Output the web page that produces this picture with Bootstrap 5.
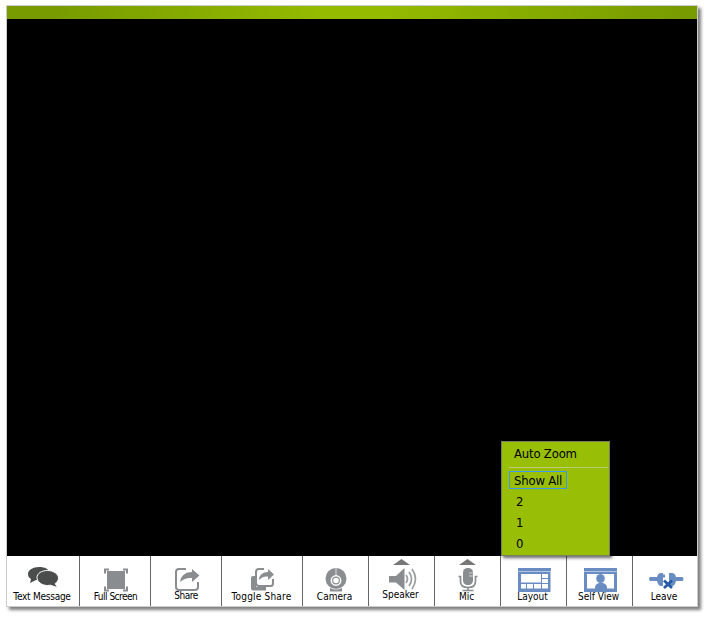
<!DOCTYPE html>
<html lang="en">
<head>
<meta charset="utf-8">
<title>Video Conference</title>
<meta name="viewport" content="width=device-width, initial-scale=1">
<link rel="stylesheet" href="https://cdn.jsdelivr.net/npm/bootstrap@5.3.0/dist/css/bootstrap.min.css">
<style>
body{font-family:"DejaVu Sans Condensed","DejaVu Sans",sans-serif;font-stretch:condensed;color:#000;height:617px;padding:5px 0 0 6px}
.call-window{width:692px;height:602px;border:1px solid #ccc;box-shadow:3px 3px 3px rgba(0,0,0,.5)}
.title-strip{height:13px;background:linear-gradient(90deg,#789b00 0,#789b00 7%,#94bb00 45%,#94bb00 55%,#789b00 98%)}
.stage{height:537px;background:#000}
.toolbar{height:50px}
.tool{border:0;border-right:1px solid #666;background:#fff;padding:0;font-size:10px;line-height:14px;white-space:nowrap;color:#000;height:50px;flex:none}
.tool:last-child{border-right:0}
.tool svg{display:block;height:34px;flex:none;overflow:visible}
.tool span{position:relative}
.up1 svg{margin-bottom:-1px}.up2 svg{margin-bottom:-2px}
.tight-text{letter-spacing:-.25px;margin-right:2px}
.tight-full{letter-spacing:-.5px;margin-left:1px}
.tight-share{letter-spacing:-.5px}
.wide-toggle{letter-spacing:.2px;margin-right:1px}
.nudge{margin-right:2px}
.layout-menu{left:501px;top:441px;width:109px;height:115px;background:#98bf05;border:1px solid #777f60;box-shadow:2px 2px 3px rgba(0,0,0,.6);font-size:13px;letter-spacing:-.2px;line-height:17px;padding:3px 0 0 7px}
.layout-menu hr{margin:5px 1px 3px 0;border-top:1px solid #bccb7c;opacity:1}
.menu-item{height:21px;padding-left:7px}
.first-item{height:17px;padding-left:5px}
.chosen{width:58px;height:18px;border:1px solid #3b98f5;padding-left:4px;line-height:17px;margin-bottom:4px}
</style>
</head>
<body class="bg-white">
<main class="call-window">
<div class="title-strip"></div>
<div class="stage"></div>
<div class="toolbar d-flex">
<button class="tool d-flex flex-column align-items-center" style="width:73px"><svg width="72" viewBox="7 556 72 34" fill="#4b4c4c"><path d="M39 567c-6 0-11 3-11 7 0 2 1 4 3 5l-1 4 6-3h3c6 0 10-3 10-7s-4-6-10-6z"/><path d="M47.500 570.500c-6 0-10.500 3-10.500 7s4.500 8 10.500 8l3-.3 7 2.500-2.300-4.200c2-1.200 3.300-3.300 3.300-5.500 0-4-5-7.500-11-7.500z" stroke="#fff"/></svg><span class="tight-text">Text Message</span></button>
<button class="tool d-flex flex-column align-items-center" style="width:71px"><svg width="70" viewBox="80 556 70 34"><path fill="#898d8f" d="M107 571h18v18h-18z"/><path d="M105 573.500v-4h4M123 569.500h4v4M105 586.500v4h4M123 590.500h4v-4" fill="none" stroke="#898d8f" stroke-width="2"/></svg><span class="tight-full">Full Screen</span></button>
<button class="tool up1 d-flex flex-column align-items-center" style="width:71px"><svg width="70" viewBox="151 556 70 34"><path d="M186 569h-7q-3 0-3 3v15q0 3 3 3h16q3 0 3-3v-5" fill="none" stroke="#898d8f" stroke-width="2"/><path d="M180 582c1-7 6-10 12-10v-3l7.500 6.500-7.500 6.500v-4c-5-.5-8 1-12 4z" fill="#898d8f"/></svg><span class="tight-share">Share</span></button>
<button class="tool d-flex flex-column align-items-center" style="width:81px"><svg width="80" viewBox="222 556 80 34"><path d="M251 578q0-2 2-2h3v11h10v3.500h-13q-2 0-2-2z" fill="#898d8f"/><path d="M264 569h-5q-3 0-3 3v11q0 3 3 3h12q2 0 2-3v-4" fill="none" stroke="#898d8f" stroke-width="2"/><path d="M259 580c0-5 4-8 9-8v-3l6 5.500-6 5.500v-3.500c-4-.3-6 .5-9 3.500z" fill="#898d8f"/></svg><span class="wide-toggle">Toggle Share</span></button>
<button class="tool d-flex flex-column align-items-center" style="width:66px"><svg width="65" viewBox="303 556 65 34"><circle cx="336" cy="578.500" r="10.500" fill="#898d8f"/><path d="M335.500 568h1v7h-1z" fill="#e0e0e0"/><circle cx="336" cy="580.500" r="4.700" fill="#898d8f" stroke="#fff" stroke-width="1.500"/><circle cx="336" cy="580.500" r="2.800" fill="#fff"/><path d="M330 588q6 3 12 0v3.500h-12z" fill="#898d8f"/></svg><span class="nudge">Camera</span></button>
<button class="tool up2 d-flex flex-column align-items-center" style="width:66px"><svg width="65" viewBox="369 556 65 34"><path d="M393 565l8.500-6 8.500 6z" fill="#777"/><path d="M389 576h7l8.500-8v22l-8.500-7.500h-7z" fill="#898d8f"/><path d="M406 575q3 4 0 8M409 572q5 7 0 14M412 569q7 10 0 20" fill="none" stroke="#9a9d9f" stroke-width="1.700"/></svg><span class="nudge">Speaker</span></button>
<button class="tool d-flex flex-column align-items-center" style="width:66px"><svg width="65" viewBox="435 556 65 34"><path d="M459 565l8.500-6 8.500 6z" fill="#777"/><rect x="463" y="568" width="10" height="17" rx="4.500" fill="#898d8f"/><path d="M469 573h4m-4 3h4" stroke="#d0d2d2"/><path d="M458.500 576.500h2v5q0 6 7.500 6t7.500-6v-5h2M468 587v3.500M462.500 590.500h11" fill="none" stroke="#898d8f" stroke-width="1.700"/></svg><span class="nudge">Mic</span></button>
<button class="tool d-flex flex-column align-items-center" style="width:66px"><svg width="65" viewBox="501 556 65 34"><path d="M518 568h33v3h-33zm0 3.500h32.500v20.500h-32.500z" fill="#698dc3"/><path d="M521 574h20v8.500h-20zm21 0h6v4h-6zm0 5h6v4h-6zm-21 5h5v4.500h-5zm6 0h6v4.500h-6zm7 0h7v4.500h-7zm8 0h6v4.500h-6z" fill="#fff"/></svg><span class="nudge">Layout</span></button>
<button class="tool d-flex flex-column align-items-center" style="width:66px"><svg width="65" viewBox="567 556 65 34"><path d="M584 568h33v3h-33zm0 3.500h33v20.500h-33z" fill="#698dc3"/><path d="M587 574h27v14.500h-27z" fill="#fff"/><ellipse cx="600.500" cy="578.500" rx="4.300" ry="4.600" fill="#698dc3"/><path d="M595 591v-3q0-4 4-5h4q4 1 4 5v3z" fill="#698dc3"/></svg><span class="nudge">Self View</span></button>
<button class="tool d-flex flex-column align-items-center" style="width:64px"><svg width="64" viewBox="633 556 64 34"><path d="M650 577h7q1-4 4-4h2v13h-2q-3 0-4-5h-7q-2-2 0-4zM682.500 577h-6.500q-1-4-4-4h-3v13h3q3 0 4-5h6.500q2-2 0-4zM663 574.500h2v3h-2z" fill="#698dc3"/><path d="M664 580.500l8 7.500m0-7.500l-8 7.500" stroke="#285aa7" stroke-width="2.800"/></svg><span class="nudge">Leave</span></button>
</div>
</main>
<div class="layout-menu position-absolute">
<div class="first-item">Auto Zoom</div>
<hr>
<div class="chosen">Show All</div>
<div class="menu-item">2</div><div class="menu-item">1</div><div class="menu-item">0</div>
</div>
<script src="https://cdn.jsdelivr.net/npm/bootstrap@5.3.0/dist/js/bootstrap.bundle.min.js"></script>
</body>
</html>
